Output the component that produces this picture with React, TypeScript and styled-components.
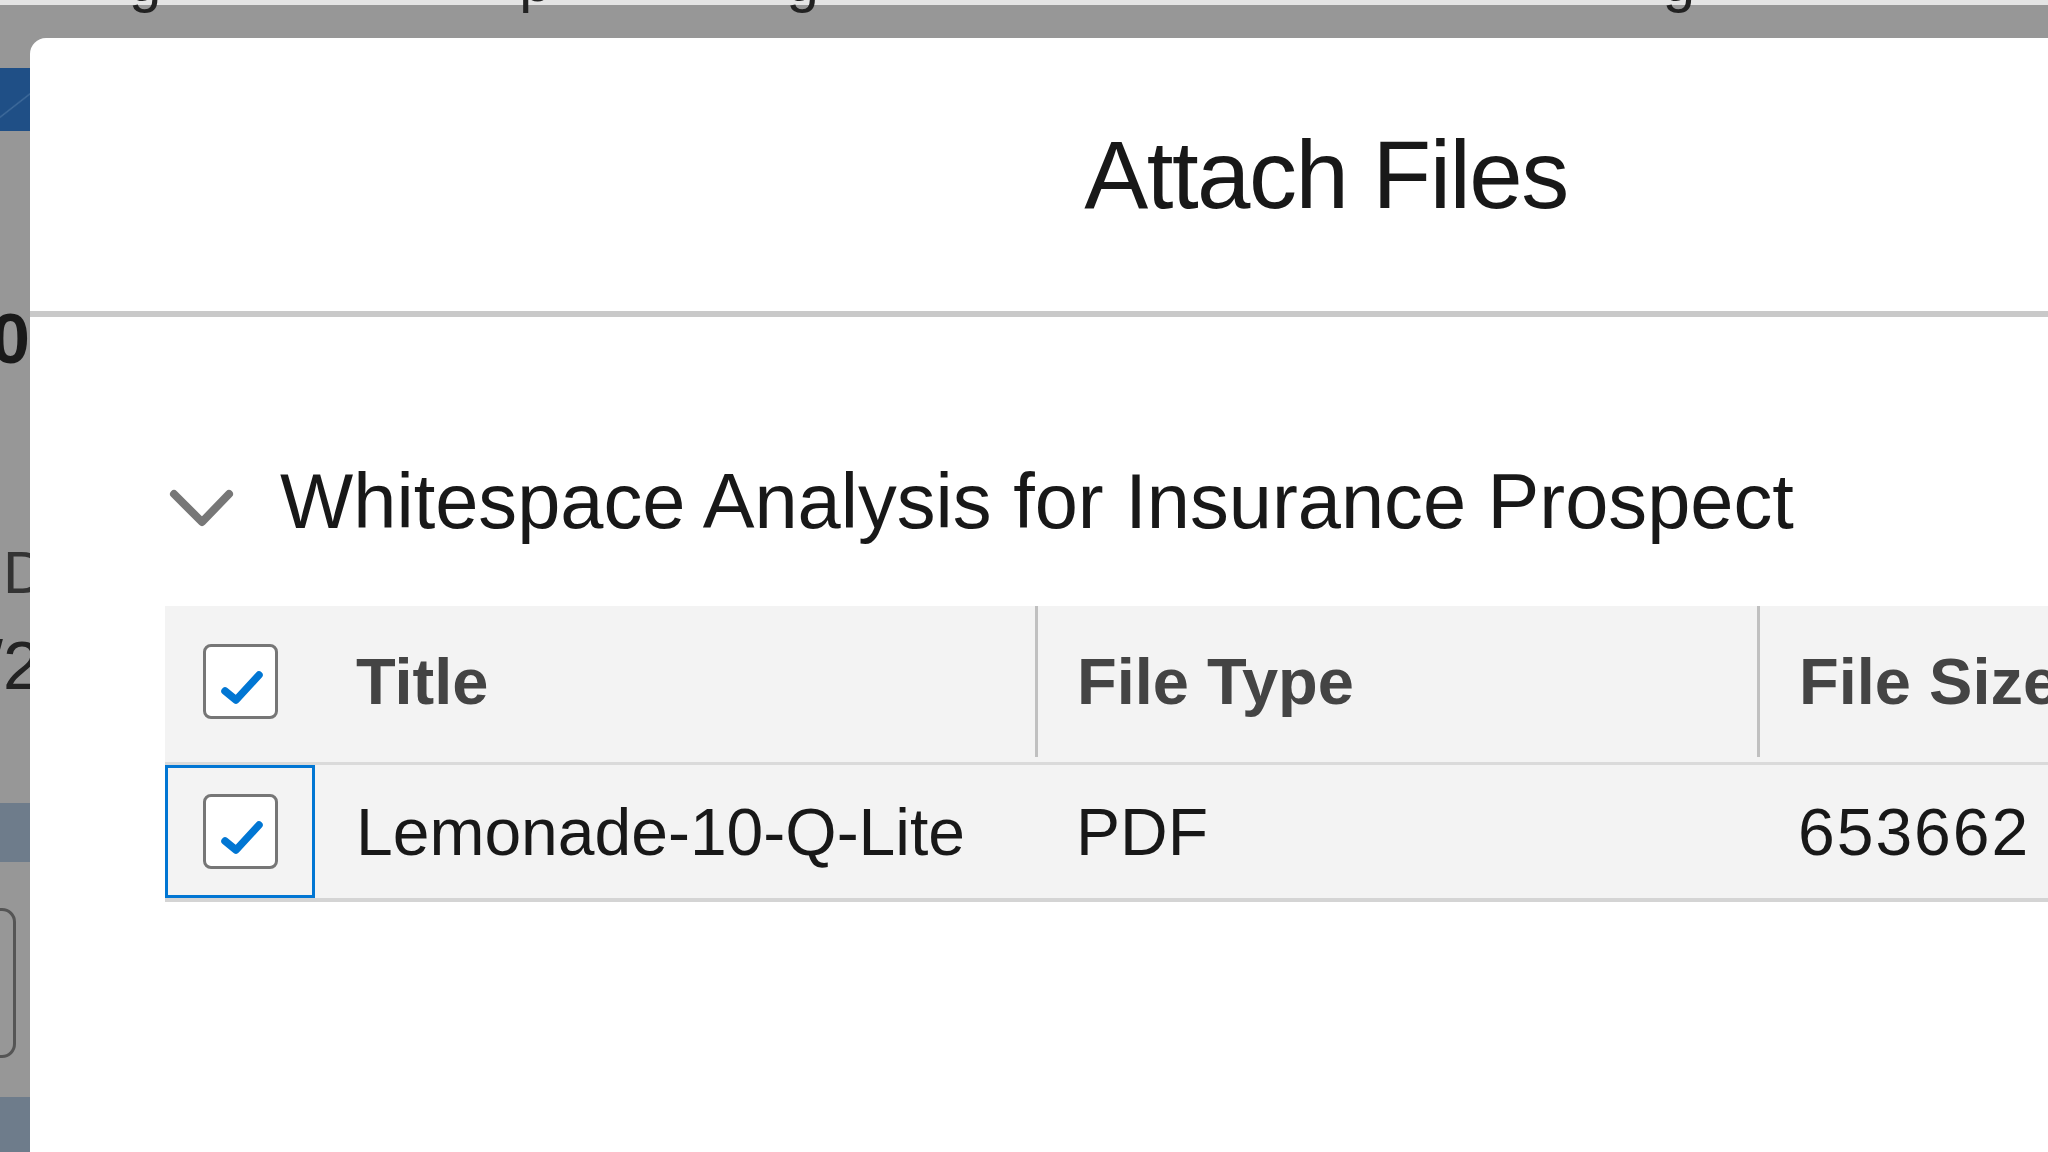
import React from "react";
import styled, { createGlobalStyle } from "styled-components";

const GlobalStyle = createGlobalStyle`
  html, body {
    margin: 0;
    padding: 0;
  }
  body {
    font-family: "Liberation Sans", Arial, sans-serif;
    background: #979797;
    overflow: hidden;
  }
`;

type Column = { key: string; label: string; width?: number };

const columns: Column[] = [
  { key: "title", label: "Title", width: 720 },
  { key: "type", label: "File Type", width: 722 },
  { key: "size", label: "File Size" },
];

const files = [{ id: 1, title: "Lemonade-10-Q-Lite", type: "PDF", size: "653662" }];

// letters of the page behind the overlay, cut off by the top edge
const topGlyphs = [
  { ch: "g", gap: 129 },
  { ch: "p", gap: 358 },
  { ch: "g", gap: 235 },
  { ch: "g", gap: 844 },
];

const CheckIcon = () => (
  <svg width="69" height="69" viewBox="0 0 69 69">
    <polyline
      points="19,44 30,53 53,28"
      fill="none"
      stroke="#0176d3"
      strokeWidth="7.5"
      strokeLinecap="round"
      strokeLinejoin="round"
    />
  </svg>
);

const ChevronDown = () => (
  <Chevron width="70" height="70" viewBox="0 0 70 70">
    <polyline
      points="9,21 37,49 64,21"
      fill="none"
      stroke="#777777"
      strokeWidth="8"
      strokeLinecap="round"
      strokeLinejoin="round"
    />
  </Chevron>
);

const App = () => {
  return (
    <>
      <GlobalStyle />
      <Page>
        <TopStrip>
          {topGlyphs.map((g, i) => (
            <Glyph key={i} $gap={g.gap}>
              {g.ch}
            </Glyph>
          ))}
        </TopStrip>
        <Main>
          <LeftStrip>
            <BlueBand />
            <BoldDigit>0</BoldDigit>
            <LetterD>D</LetterD>
            <DateText>/2</DateText>
            <SlateBand />
            <GhostBox />
            <SlateBand $last />
          </LeftStrip>
          <Modal>
            <ModalHeader>
              <ModalTitle>Attach Files</ModalTitle>
            </ModalHeader>
            <ModalBody>
              <SectionHeader>
                <ChevronDown />
                <SectionTitle>Whitespace Analysis for Insurance Prospect</SectionTitle>
              </SectionHeader>
              <Table>
                <HeaderRow>
                  <CheckCell>
                    <Checkbox>
                      <CheckIcon />
                    </Checkbox>
                  </CheckCell>
                  {columns.map((c, i) => (
                    <HeadCell key={c.key} $width={c.width} $divided={i > 0}>
                      {c.label}
                    </HeadCell>
                  ))}
                </HeaderRow>
                {files.map((f) => (
                  <DataRow key={f.id}>
                    <CheckCell $focused>
                      <Checkbox>
                        <CheckIcon />
                      </Checkbox>
                    </CheckCell>
                    <BodyCell $width={720}>{f.title}</BodyCell>
                    <BodyCell $width={722}>{f.type}</BodyCell>
                    <BodyCell $numeric>{f.size}</BodyCell>
                  </DataRow>
                ))}
              </Table>
            </ModalBody>
          </Modal>
        </Main>
      </Page>
    </>
  );
};

const Page = styled.div`
  width: 2048px;
  height: 1152px;
  overflow: hidden;
  display: flex;
  flex-direction: column;
  background: #979797;
`;

const TopStrip = styled.div`
  height: 38px;
  flex-shrink: 0;
  display: flex;
  overflow: hidden;
  background: linear-gradient(#e4e4e4 0, #e4e4e4 5px, #979797 5px);
`;

const Glyph = styled.span<{ $gap: number }>`
  margin-left: ${(p) => p.$gap}px;
  margin-top: -48px;
  font-size: 58px;
  line-height: 1;
  height: 58px;
  color: #222222;
`;

const Main = styled.div`
  display: flex;
  flex: 1;
  min-height: 0;
`;

const LeftStrip = styled.div`
  width: 30px;
  flex-shrink: 0;
  display: flex;
  flex-direction: column;
  overflow: hidden;
`;

const BlueBand = styled.div`
  margin-top: 30px;
  height: 63px;
  flex-shrink: 0;
  background: linear-gradient(
    142deg,
    #1f4f86 0,
    #1f4f86 55%,
    #3f6b9b 57%,
    #1f4f86 59%,
    #1f4f86 100%
  );
`;

const BoldDigit = styled.div`
  margin-top: 173px;
  display: flex;
  justify-content: flex-end;
  font-size: 70px;
  font-weight: 700;
  line-height: 1;
  color: #1a1a1a;
  white-space: nowrap;
`;

const LetterD = styled.div`
  margin-top: 169px;
  padding-left: 3px;
  font-size: 60px;
  line-height: 1;
  color: #333333;
  white-space: nowrap;
`;

const DateText = styled.div`
  margin-top: 28px;
  margin-left: -16px;
  font-size: 68px;
  line-height: 1;
  color: #222222;
  white-space: nowrap;
`;

const SlateBand = styled.div<{ $last?: boolean }>`
  margin-top: ${(p) => (p.$last ? 39 : 104)}px;
  height: ${(p) => (p.$last ? "auto" : "59px")};
  flex: ${(p) => (p.$last ? 1 : "none")};
  background: #6e7c8b;
`;

const GhostBox = styled.div`
  margin-top: 46px;
  margin-left: -20px;
  width: 36px;
  height: 150px;
  flex-shrink: 0;
  box-sizing: border-box;
  border: 3px solid #555555;
  border-radius: 14px;
`;

const Modal = styled.div`
  width: 2592px;
  flex-shrink: 0;
  background: #ffffff;
  border-top-left-radius: 16px;
  display: flex;
  flex-direction: column;
`;

const ModalHeader = styled.div`
  height: 273px;
  display: flex;
  align-items: center;
  justify-content: center;
  border-bottom: 6px solid #c9c9c9;
`;

const ModalTitle = styled.h2`
  margin: 0;
  font-size: 96px;
  font-weight: 400;
  line-height: 1;
  letter-spacing: -1.5px;
  color: #181818;
`;

const ModalBody = styled.div`
  padding: 146px 135px 0;
`;

const SectionHeader = styled.div`
  display: flex;
  align-items: flex-start;
  gap: 45px;
  height: 78px;
`;

const Chevron = styled.svg`
  margin-top: 10px;
  flex-shrink: 0;
`;

const SectionTitle = styled.h3`
  margin: 0;
  font-size: 77.6px;
  font-weight: 400;
  line-height: 1;
  color: #181818;
  white-space: nowrap;
`;

const Table = styled.div`
  margin-top: 65px;
  display: flex;
  flex-direction: column;
`;

const HeaderRow = styled.div`
  display: flex;
  height: 151px;
  padding-bottom: 5px;
  background: #f3f3f3;
  border-bottom: 3px solid #dadada;
`;

const DataRow = styled.div`
  display: flex;
  height: 133px;
  background: #f3f3f3;
  border-bottom: 4px solid #d4d4d4;
`;

const CheckCell = styled.div<{ $focused?: boolean }>`
  width: 150px;
  flex-shrink: 0;
  display: flex;
  align-items: center;
  justify-content: center;
  box-shadow: ${(p) => (p.$focused ? "inset 0 0 0 3px #0176d3" : "none")};
`;

const Checkbox = styled.div`
  width: 75px;
  height: 75px;
  box-sizing: border-box;
  border: 3px solid #767676;
  border-radius: 8px;
  background: #ffffff;
  display: flex;
`;

const HeadCell = styled.div<{ $width?: number; $divided?: boolean }>`
  display: flex;
  align-items: center;
  box-sizing: border-box;
  width: ${(p) => (p.$width ? `${p.$width}px` : "auto")};
  flex: ${(p) => (p.$width ? "none" : 1)};
  padding-left: ${(p) => (p.$divided ? 39 : 41)}px;
  border-left: ${(p) => (p.$divided ? "3px solid #c0c0c0" : "none")};
  font-size: 65px;
  font-weight: 700;
  line-height: 1;
  color: #444444;
  white-space: nowrap;
`;

const BodyCell = styled.div<{ $width?: number; $numeric?: boolean }>`
  display: flex;
  align-items: center;
  box-sizing: border-box;
  width: ${(p) => (p.$width ? `${p.$width}px` : "auto")};
  flex: ${(p) => (p.$width ? "none" : 1)};
  padding-left: 41px;
  font-size: 66px;
  line-height: 1;
  letter-spacing: ${(p) => (p.$numeric ? "2px" : "0")};
  color: #181818;
  white-space: nowrap;
`;

export default App;
